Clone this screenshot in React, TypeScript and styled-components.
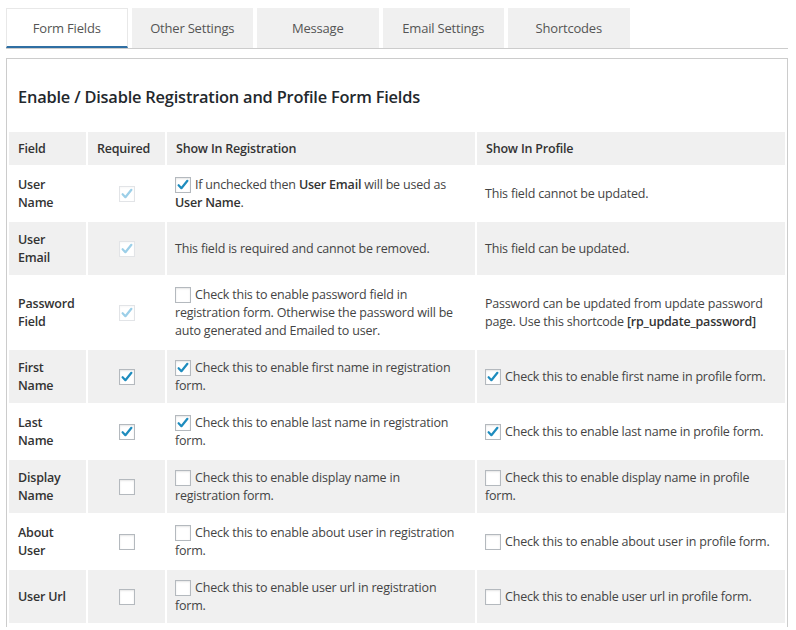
import React from 'react';
import styled, { createGlobalStyle, css } from 'styled-components';

const GlobalStyle = createGlobalStyle`
  body {
    margin: 0;
    background: #fff;
    font-family: "Open Sans", "Noto Sans", sans-serif;
    font-size: 12.5px;
    letter-spacing: -0.2px;
    color: #444;
  }
`;

const Page = styled.div`
  padding: 8px 8px 0 6px;
`;

// tabs across the top
const TabBar = styled.div`
  display: flex;
  gap: 4px;
  border-bottom: 1px solid #ccc;
`;

const Tab = styled.div<{ $active?: boolean }>`
  box-sizing: border-box;
  width: 121.5px;
  height: 40px;
  display: flex;
  align-items: center;
  justify-content: center;
  font-size: 13px;
  color: #555;
  background: #f0f0f0;
  cursor: pointer;
  ${(p) =>
    p.$active &&
    css`
      background: #fff;
      border: 1px solid #e8e8e8;
      border-bottom: 2px solid #2f6fa3;
      padding-top: 1px;
    `}
`;

const Panel = styled.div`
  margin-top: 9px;
  border: 1px solid #ccc;
  border-bottom: none;
  padding-bottom: 2px;
`;

const Title = styled.h3`
  margin: 0;
  padding: 27px 11px 24px;
  font-size: 16.4px;
  font-weight: 600;
  color: #23282d;
  line-height: 22px;
`;

const Table = styled.table`
  width: 100%;
  table-layout: fixed;
  border-collapse: separate;
  border-spacing: 2px;
  margin-top: -2px;
`;

const HeadCell = styled.th<{ $w: number }>`
  box-sizing: border-box;
  width: ${(p) => p.$w}px;
  background: #f0f0f0;
  text-align: left;
  font-weight: 600;
  color: #333;
  padding: 7px 8px 7px 9px;
  line-height: 19px;
`;

const Row = styled.tr<{ $shade: boolean }>`
  background: ${(p) => (p.$shade ? '#f0f0f0' : '#fff')};
`;

const Cell = styled.td<{ $center?: boolean }>`
  padding: 8.5px 8px;
  line-height: 18px;
  vertical-align: middle;
  ${(p) => p.$center && css`text-align: center;`}
`;

const FieldName = styled(Cell)`
  padding-left: 9px;
  font-weight: 600;
  color: #333;
`;

const Box = styled.span<{ $disabled?: boolean }>`
  box-sizing: border-box;
  display: inline-block;
  position: relative;
  width: 16px;
  height: 16px;
  margin-right: 4px;
  vertical-align: -4px;
  background: #fff;
  border: 1px solid ${(p) => (p.$disabled ? '#e2e4e7' : '#b4b9be')};
  box-shadow: inset 0 1px 2px rgba(0, 0, 0, ${(p) => (p.$disabled ? 0.03 : 0.1)});

  svg {
    position: absolute;
    left: 0;
    top: 0;
  }
`;

const CenterBox = styled(Box)`
  margin: 0;
  vertical-align: middle;
`;

const Strong = styled.b`
  font-weight: 600;
  color: #333;
`;

const Check = ({ color }: { color: string }) => (
  <svg width="14" height="14" viewBox="0 0 14 14">
    <path d="M2.6 7.2 L5.4 10.2 L11.4 2.8" fill="none" stroke={color} strokeWidth="2.2" strokeLinecap="round" strokeLinejoin="round" />
  </svg>
);

type BoxState = 'on' | 'off' | 'locked';

const CheckBox = ({ state, centered }: { state: BoxState; centered?: boolean }) => {
  const B = centered ? CenterBox : Box;
  return (
    <B $disabled={state === 'locked'}>
      {state !== 'off' && <Check color={state === 'locked' ? '#9ccfe8' : '#1e8cbe'} />}
    </B>
  );
};

type FieldRow = {
  name: React.ReactNode;
  required: BoxState;
  reg: React.ReactNode;
  profile: React.ReactNode;
};

const rows: FieldRow[] = [
  {
    name: <>User<br />Name</>,
    required: 'locked',
    reg: (
      <>
        <CheckBox state="on" />If unchecked then <Strong>User Email</Strong> will be used as <Strong>User Name</Strong>.
      </>
    ),
    profile: 'This field cannot be updated.',
  },
  {
    name: <>User<br />Email</>,
    required: 'locked',
    reg: 'This field is required and cannot be removed.',
    profile: 'This field can be updated.',
  },
  {
    name: <>Password<br />Field</>,
    required: 'locked',
    reg: (
      <>
        <CheckBox state="off" />Check this to enable password field in registration form. Otherwise the password will be auto generated and Emailed to user.
      </>
    ),
    profile: (
      <>
        Password can be updated from update password page. Use this shortcode <Strong>[rp_update_password]</Strong>
      </>
    ),
  },
  {
    name: <>First<br />Name</>,
    required: 'on',
    reg: <><CheckBox state="on" />Check this to enable first name in registration form.</>,
    profile: <><CheckBox state="on" />Check this to enable first name in profile form.</>,
  },
  {
    name: <>Last<br />Name</>,
    required: 'on',
    reg: <><CheckBox state="on" />Check this to enable last name in registration form.</>,
    profile: <><CheckBox state="on" />Check this to enable last name in profile form.</>,
  },
  {
    name: <>Display<br />Name</>,
    required: 'off',
    reg: <><CheckBox state="off" />Check this to enable display name in registration form.</>,
    profile: <><CheckBox state="off" />Check this to enable display name in profile form.</>,
  },
  {
    name: <>About<br />User</>,
    required: 'off',
    reg: <><CheckBox state="off" />Check this to enable about user in registration form.</>,
    profile: <><CheckBox state="off" />Check this to enable about user in profile form.</>,
  },
  {
    name: 'User Url',
    required: 'off',
    reg: <><CheckBox state="off" />Check this to enable user url in registration form.</>,
    profile: <><CheckBox state="off" />Check this to enable user url in profile form.</>,
  },
];

const tabs = ['Form Fields', 'Other Settings', 'Message', 'Email Settings', 'Shortcodes'];

export default function App() {
  return (
    <Page>
      <GlobalStyle />
      <TabBar>
        {tabs.map((t, i) => (
          <Tab key={t} $active={i === 0}>{t}</Tab>
        ))}
      </TabBar>
      <Panel>
        <Title>Enable / Disable Registration and Profile Form Fields</Title>
        <Table>
          <thead>
            <tr>
              <HeadCell $w={77}>Field</HeadCell>
              <HeadCell $w={77}>Required</HeadCell>
              <HeadCell $w={308}>Show In Registration</HeadCell>
              <HeadCell $w={308}>Show In Profile</HeadCell>
            </tr>
          </thead>
          <tbody>
            {rows.map((r, i) => (
              <Row key={i} $shade={i % 2 === 1}>
                <FieldName>{r.name}</FieldName>
                <Cell $center><CheckBox state={r.required} centered /></Cell>
                <Cell>{r.reg}</Cell>
                <Cell>{r.profile}</Cell>
              </Row>
            ))}
          </tbody>
        </Table>
      </Panel>
    </Page>
  );
}
